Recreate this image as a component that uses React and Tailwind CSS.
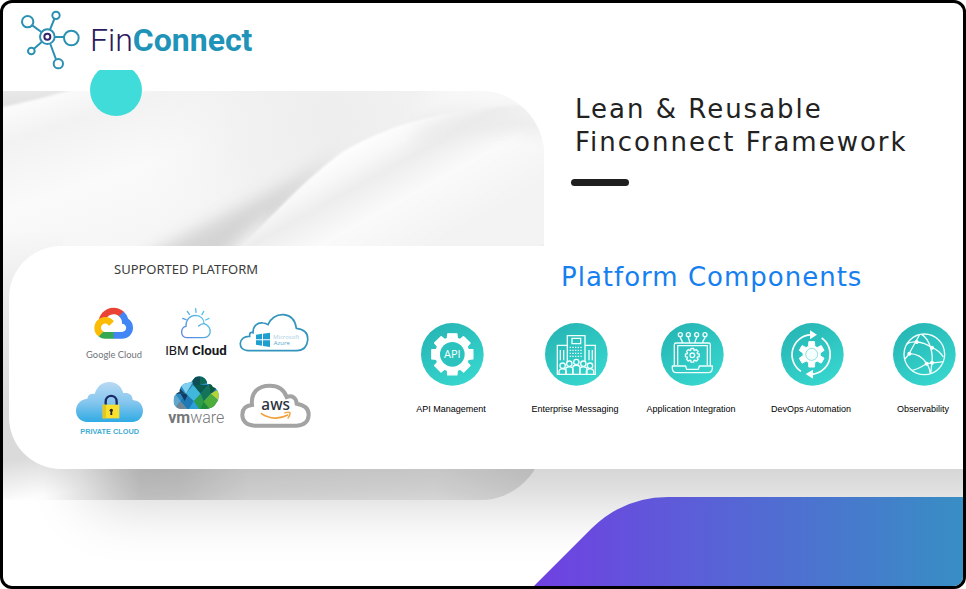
import React from "react";

const TEAL_FROM = "#26b5b4";
const TEAL_TO = "#38d8d0";

function gearPath(cx, cy, teeth, outer, inner, spread, tip) {
  const points = [];
  for (let i = 0; i < teeth; i += 1) {
    const a = (i * 2 * Math.PI) / teeth - Math.PI / 2;
    [
      [inner, -spread],
      [outer, -tip],
      [outer, tip],
      [inner, spread],
    ].forEach(([r, d]) => {
      points.push(`${(cx + r * Math.cos(a + d)).toFixed(1)} ${(cy + r * Math.sin(a + d)).toFixed(1)}`);
    });
  }
  return `M${points.join("L")}Z`;
}

function BrandMark() {
  return (
    <svg className="h-16 w-[62px]" viewBox="54 24 186 192" fill="none" stroke="#2b91b3" strokeWidth="6" aria-hidden="true">
      <path d="M97 76L124 96M163 57L150 89M165 111H192M102 146L125 126M151 132L168 178" />
      <circle cx="83" cy="65" r="17" />
      <circle cx="168" cy="46" r="11" />
      <circle cx="214" cy="114" r="22" />
      <circle cx="94" cy="153" r="10" />
      <circle cx="175" cy="191" r="14" />
      <circle cx="142" cy="110" r="22" />
      <circle cx="142" cy="110" r="9" stroke="#33246b" strokeWidth="6" />
    </svg>
  );
}

function SilkBackdrop() {
  return (
    <svg className="h-full w-full" viewBox="0 0 541 409" preserveAspectRatio="none" aria-hidden="true">
      <defs>
        <linearGradient id="silkBase" gradientUnits="userSpaceOnUse" x1="60" y1="0" x2="110" y2="150">
          <stop offset="0" stopColor="#fbfbfb" />
          <stop offset="0.2" stopColor="#f2f2f2" />
          <stop offset="0.6" stopColor="#fafafa" />
          <stop offset="1" stopColor="#f6f6f6" />
        </linearGradient>
        <linearGradient id="silkCorner" x1="0" y1="0" x2="0.3" y2="1">
          <stop offset="0" stopColor="#ececec" />
          <stop offset="1" stopColor="#e0e0e0" />
        </linearGradient>
        <linearGradient id="silkFold" gradientUnits="userSpaceOnUse" x1="325" y1="72" x2="385" y2="180">
          <stop offset="0" stopColor="#fdfdfd" />
          <stop offset="0.12" stopColor="#f8f8f8" />
          <stop offset="0.28" stopColor="#ededed" />
          <stop offset="0.55" stopColor="#fafafa" />
          <stop offset="1" stopColor="#f3f3f3" />
        </linearGradient>
        <radialGradient id="silkHaze" gradientUnits="userSpaceOnUse" cx="330" cy="30" r="200">
          <stop offset="0" stopColor="#ededed" />
          <stop offset="0.5" stopColor="#f0f0f0" stopOpacity="0.8" />
          <stop offset="1" stopColor="#f4f4f4" stopOpacity="0" />
        </radialGradient>
        <linearGradient id="silkEdge" gradientUnits="userSpaceOnUse" x1="0" y1="140" x2="0" y2="320">
          <stop offset="0" stopColor="#dadada" stopOpacity="0" />
          <stop offset="1" stopColor="#dadada" />
        </linearGradient>
        <linearGradient id="silkFoot" gradientUnits="userSpaceOnUse" x1="0" y1="320" x2="16" y2="409">
          <stop offset="0" stopColor="#dadada" />
          <stop offset="0.55" stopColor="#dadada" />
          <stop offset="1" stopColor="#fdfdfd" />
        </linearGradient>
        <linearGradient id="silkHem" gradientUnits="userSpaceOnUse" x1="40" y1="390" x2="530" y2="380">
          <stop offset="0" stopColor="#dcdcdc" stopOpacity="0" />
          <stop offset="0.08" stopColor="#e2e2e2" stopOpacity="0.6" />
          <stop offset="0.2" stopColor="#d4d4d4" />
          <stop offset="0.28" stopColor="#d6d6d6" />
          <stop offset="0.42" stopColor="#e8e8e8" />
          <stop offset="0.8" stopColor="#ececec" />
          <stop offset="1" stopColor="#dedede" />
        </linearGradient>
        <filter id="silkSoft" x="-50%" y="-50%" width="200%" height="200%" colorInterpolationFilters="sRGB">
          <feGaussianBlur stdDeviation="8" />
        </filter>
        <filter id="silkFine" x="-30%" y="-30%" width="160%" height="160%" colorInterpolationFilters="sRGB">
          <feGaussianBlur stdDeviation="1" />
        </filter>
      </defs>
      <rect width="541" height="409" fill="url(#silkBase)" />
      <rect width="541" height="180" fill="url(#silkHaze)" />
      <path d="M450 -10H520L540 14L450 9L400 22Z" fill="#f8f8f8" filter="url(#silkSoft)" />
      <path d="M-5 -5H84C50 4 25 11 -5 17Z" fill="url(#silkCorner)" filter="url(#silkFine)" />
      <path d="M90 200C160 146 240 122 340 60C310 88 262 134 225 190Z" fill="#d4d4d4" filter="url(#silkSoft)" />
      <path d="M205 190C222 160 246 144 270 118L246 180Z" fill="#f6f6f6" filter="url(#silkSoft)" />
      <path d="M222 172C270 124 300 90 338 62C385 34 440 16 545 14V180Z" fill="url(#silkFold)" filter="url(#silkFine)" />
      <path d="M420 38C450 26 480 24 545 26V42C480 34 450 42 410 54Z" fill="#e9e9e9" filter="url(#silkSoft)" />
      <path d="M518 164L545 153V170H518Z" fill="#dddddd" filter="url(#silkFine)" />
      <rect y="140" width="60" height="180" fill="url(#silkEdge)" />
      <rect y="320" width="200" height="89" fill="url(#silkFoot)" />
      <rect x="40" y="372" width="501" height="37" fill="url(#silkHem)" />
    </svg>
  );
}

function GoogleCloudLogo() {
  return (
    <svg className="w-full" viewBox="33 30 246 168" role="img" aria-label="Google Cloud">
      <g transform="translate(103 38) scale(0.453)">
        <path fill="#ea4335" d="M170.252 56.819l22.253-22.253 1.483-9.37C153.437-11.677 88.976-7.496 52.42 33.92 42.267 45.423 34.734 59.764 30.717 74.573l7.97-1.123 44.505-7.34 3.436-3.513c19.797-21.742 53.27-24.667 76.128-6.168l7.496.39z" />
        <path fill="#4285f4" d="M224.205 73.918a100.249 100.249 0 0 0-30.217-48.722l-31.232 31.232a55.515 55.515 0 0 1 20.379 44.037v5.544c15.35 0 27.797 12.445 27.797 27.796 0 15.352-12.446 27.573-27.797 27.573h-55.671l-5.466 5.934v33.34l5.466 5.231h55.67c39.93.311 72.553-31.494 72.864-71.424a72.303 72.303 0 0 0-31.793-60.541" />
        <path fill="#34a853" d="M71.87 205.796h55.593V161.29H71.87a27.275 27.275 0 0 1-11.4-2.498l-7.887 2.42-22.409 22.253-1.952 7.574a72.164 72.164 0 0 0 43.648 14.757" />
        <path fill="#fbbc05" d="M71.87 61.425C31.94 61.663-.237 94.228.001 134.158a72.301 72.301 0 0 0 28.222 56.88l32.248-32.246c-13.99-6.322-20.208-22.786-13.887-36.776 6.32-13.99 22.786-20.208 36.775-13.888a27.796 27.796 0 0 1 13.887 13.888l32.248-32.248A72.224 72.224 0 0 0 71.87 61.425" />
      </g>
      <text x="162" y="189" textAnchor="middle" className="fill-[#6f7377] font-['Lato',sans-serif] text-[28px]">Google Cloud</text>
    </svg>
  );
}

function IbmCloudLogo() {
  return (
    <svg className="w-full" viewBox="279 30 246 168" role="img" aria-label="IBM Cloud">
      <defs>
        <linearGradient id="ibmStroke" gradientUnits="userSpaceOnUse" x1="364" y1="128" x2="450" y2="45">
          <stop offset="0" stopColor="#5b7fe0" />
          <stop offset="1" stopColor="#4fd6e6" />
        </linearGradient>
      </defs>
      <g fill="none" stroke="url(#ibmStroke)" strokeWidth="4" strokeLinecap="round">
        <path d="M431 85C446 90 453 103 450 114C447 124 440 128 430 128H381C370 128 364 120 365 109C366 100 371 95 378 94C377 74 390 61 407 61C422 62 432 72 432 86C425 86 420 89 416 93" />
        <path d="M368 70L378 74M382 49L388 58M407 41L408 52M431 49L426 59M447 70L437 75" />
      </g>
      <text x="408" y="180" textAnchor="middle" className="fill-[#16181c] font-['Roboto',sans-serif] text-[40px]">
        IBM <tspan className="font-bold">Cloud</tspan>
      </text>
    </svg>
  );
}

function AzureLogo() {
  return (
    <svg className="w-full" viewBox="525 30 246 168" role="img" aria-label="Microsoft Azure">
      <path d="M563 167C549 165 540 158 541 145C542 132 553 123 569 124C568 114 572 110 579 113C579 93 591 82 609 84C615 84 620 86 624 89C634 67 649 58 671 59C693 61 706 76 709 100C733 103 745 116 743 136C741 155 730 166 711 167Z" fill="none" stroke="#3395bd" strokeWidth="5" />
      <path fill="#1f9fd0" d="M588 119L606 116V133H588ZM609 116L630 113V133H609ZM588 136H606V152L588 149ZM609 136H630V156L609 153Z" />
      <text x="639" y="132" className="fill-[#a9cfe2] font-['Open_Sans',sans-serif] text-[18px]">Microsoft</text>
      <text x="641" y="151" className="fill-[#4fa6cc] font-['Open_Sans',sans-serif] text-[18px]">Azure</text>
    </svg>
  );
}

function PrivateCloudLogo() {
  return (
    <svg className="w-full" viewBox="33 234 246 198" role="img" aria-label="Private Cloud">
      <defs>
        <linearGradient id="privateSky" x1="0" y1="0" x2="0" y2="1">
          <stop offset="0" stopColor="#b8daf4" />
          <stop offset="0.5" stopColor="#86c6ee" />
          <stop offset="1" stopColor="#2fabe4" />
        </linearGradient>
      </defs>
      <path d="M82 381C62 380 48 366 48 347C49 326 62 313 82 311C84 299 92 295 104 297C111 274 126 261 149 261C171 262 186 276 190 295C203 291 218 298 218 315C238 317 249 329 249 348C248 368 236 380 217 381Z" fill="url(#privateSky)" />
      <path d="M137 331V320C137 297 170 297 170 320V331" fill="none" stroke="#1d2a66" strokeWidth="7" />
      <rect x="128" y="329" width="50" height="41" fill="#f8e02c" />
      <path d="M128 329H138V370H128Z" fill="#e5c51f" />
      <circle cx="154" cy="346" r="5" fill="#2a2a3c" />
      <path d="M152 346H156L157 360H151Z" fill="#2a2a3c" />
      <text x="149" y="418" textAnchor="middle" className="fill-[#43acd3] font-['Liberation_Sans',Arial,sans-serif] text-[22px] font-bold">PRIVATE CLOUD</text>
    </svg>
  );
}

function VmwareLogo() {
  return (
    <svg className="w-full" viewBox="279 234 246 198" role="img" aria-label="vmware">
      <defs>
        <clipPath id="vmCloud">
          <path d="M362 342C348 340 340 330 341 316C341 303 348 294 359 291C358 275 370 263 386 263C392 263 395 260 399 255C404 247 410 244 418 244C431 244 440 253 442 267C451 266 457 270 458 276C470 279 477 290 476 303C476 315 471 322 468 325C463 336 450 342 438 342Z" />
        </clipPath>
      </defs>
      <g clipPath="url(#vmCloud)">
        <path fill="#2a8bc0" d="M340 240H480V345H340Z" />
        <path fill="#5fa7cf" d="M340 290L362 318L340 345Z" />
        <path fill="#18405f" d="M355 275L375 296L340 296Z" />
        <path fill="#70879a" d="M340 345L362 318L385 345Z" />
        <path fill="#7fd0ee" d="M358 262H398L378 296Z" />
        <path fill="#1d7ab5" d="M362 318L378 296L400 318L385 345Z" />
        <path fill="#143a63" d="M362 296H385L374 318Z" />
        <path fill="#2a9fd8" d="M385 345L402 318L420 345Z" />
        <path fill="#42b7dc" d="M378 296L400 270L422 296L402 318Z" />
        <path fill="#0f4d55" d="M393 240H420V270L400 270Z" />
        <path fill="#0c6a56" d="M420 240L448 262L420 270Z" />
        <path fill="#0b5a50" d="M400 270H445L422 296Z" />
        <path fill="#13745a" d="M422 296L445 270L452 296L430 320Z" />
        <path fill="#2c9e4a" d="M402 318L422 296L432 322L420 345Z" />
        <path fill="#0e5a3e" d="M445 265L480 270L452 298Z" />
        <path fill="#b4d334" d="M452 296L480 280V320Z" />
        <path fill="#4fae3a" d="M430 320L452 296L480 322L450 345Z" />
        <path fill="#1f8a3a" d="M420 345L431 320L452 345Z" />
      </g>
      <text x="409" y="383" textAnchor="middle" className="fill-[#76777a] font-['Roboto',sans-serif] text-[48px] font-light">
        <tspan className="font-bold">vm</tspan>ware
      </text>
    </svg>
  );
}

function AwsLogo() {
  return (
    <svg className="w-full" viewBox="525 234 246 198" role="img" aria-label="aws">
      <path d="M584 392C559 391 546 377 547 358C548 340 560 331 576 330C572 293 594 272 629 272C656 272 673 285 680 306C697 300 709 309 710 326C733 330 747 341 746 360C745 380 732 391 710 392Z" fill="none" stroke="#a3a3a3" strokeWidth="12" />
      <text x="647" y="345" textAnchor="middle" className="fill-[#2b3340] font-['Noto_Sans',sans-serif] text-[46px] font-medium">aws</text>
      <path d="M604 356C630 373 660 373 683 360" fill="none" stroke="#f2a03c" strokeWidth="5" strokeLinecap="round" />
      <path d="M674 354C681 351 688 351 690 353C691 357 688 364 684 369" fill="none" stroke="#f2a03c" strokeWidth="4" strokeLinecap="round" />
    </svg>
  );
}

function Badge({ id, children }) {
  return (
    <svg className="size-[63px]" viewBox="0 0 189 189" aria-hidden="true">
      <defs>
        <linearGradient id={id} x1="0.2" y1="0" x2="0.8" y2="1">
          <stop offset="0" stopColor={TEAL_FROM} />
          <stop offset="1" stopColor={TEAL_TO} />
        </linearGradient>
      </defs>
      <circle cx="94" cy="94" r="94" fill={`url(#${id})`} />
      {children}
    </svg>
  );
}

function ApiIcon() {
  return (
    <Badge id="badgeApi">
      <path d={gearPath(94, 94, 8, 63, 50, 0.3, 0.22)} fill="#fff" stroke="#fff" strokeWidth="4" strokeLinejoin="round" />
      <circle cx="94" cy="94" r="37" fill="#2cc3bf" />
      <text x="94" y="105" textAnchor="middle" className="fill-white font-['Open_Sans',sans-serif] text-[33px]">API</text>
    </Badge>
  );
}

function EnterpriseIcon() {
  const people = [[53, 128], [73, 122], [94, 117], [115, 122], [135, 128]];
  return (
    <Badge id="badgeEnterprise">
      <g fill="none" stroke="#effffe" strokeWidth="4">
        <path d="M37 154V67H67M67 120V38H120V120M120 67H151V154M35 154H153" />
        <path d="M81 46H107V62H81Z" />
        <path d="M46 81V112M56 81V112M132 81V112M142 81V112" />
        <path d="M74 73H113M74 82H113M74 91H113M74 100H113" strokeDasharray="4 4" />
        {people.map(([x, y]) => (
          <g key={x}>
            <circle cx={x} cy={y} r="8" fill="#2fc7c3" />
            <path d={`M${x - 11} 154V${y + 18}C${x - 11} ${y + 7} ${x + 11} ${y + 7} ${x + 11} ${y + 18}V154`} />
          </g>
        ))}
      </g>
    </Badge>
  );
}

function IntegrationIcon() {
  return (
    <Badge id="badgeIntegration">
      <g fill="none" stroke="#effffe" strokeWidth="4" strokeLinejoin="round">
        <path d="M40 128V65Q40 60 45 60H143Q148 60 148 65V128" />
        <path d="M50 126V68H139V126" />
        <path d="M34 129H74L77 139H112L115 129H154V136Q154 149 142 149H46Q34 149 34 136Z" />
        <circle cx="58" cy="35" r="6" />
        <circle cx="82" cy="35" r="6" />
        <circle cx="107" cy="35" r="6" />
        <circle cx="132" cy="35" r="6" />
        <path d="M58 41C58 51 64 48 64 60M82 41C82 51 86 48 86 60M107 41C107 51 102 48 102 60M132 41C132 51 125 48 125 60" />
        <path d={gearPath(94, 97, 8, 21, 16, 0.3, 0.2)} />
        <circle cx="94" cy="97" r="7" />
      </g>
    </Badge>
  );
}

function DevOpsIcon() {
  return (
    <Badge id="badgeDevops">
      <path d={gearPath(92, 94, 6, 39, 26, 0.36, 0.22)} fill="#fff" stroke="#fff" strokeWidth="3" strokeLinejoin="round" />
      <circle cx="92" cy="94" r="18" fill="#f4fffe" stroke="#5fcfcb" strokeWidth="2" />
      <g fill="none" stroke="#fff" strokeWidth="5">
        <path d="M60 145A60 60 0 0 1 90 35" />
        <path d="M122 45A60 60 0 0 1 93 154" />
      </g>
      <path d="M87 22L108 35L87 49ZM96 140L74 153L96 167Z" fill="#fff" />
    </Badge>
  );
}

function ObservabilityIcon() {
  return (
    <Badge id="badgeObservability">
      <g fill="none" stroke="#effffe" strokeWidth="4">
        <circle cx="94" cy="94" r="61" />
        <path d="M41 64C52 54 62 56 71 57C90 58 104 65 117 74C132 80 142 88 151 102M79 36C66 62 56 76 49 92L36 108M86 34C108 48 121 85 117 119L113 152M49 92C75 92 90 104 101 122C108 130 110 140 112 152M101 122C118 118 138 120 150 116M58 142C76 138 88 130 101 122" />
      </g>
      <g fill="#fff">
        <circle cx="71" cy="57" r="6" />
        <circle cx="49" cy="92" r="6" />
        <circle cx="117" cy="74" r="6" />
        <circle cx="101" cy="122" r="6" />
        <circle cx="117" cy="119" r="6" />
      </g>
    </Badge>
  );
}

const PLATFORMS = [GoogleCloudLogo, IbmCloudLogo, AzureLogo, PrivateCloudLogo, VmwareLogo, AwsLogo];

const COMPONENTS = [
  { label: "API Management", Icon: ApiIcon },
  { label: "Enterprise Messaging", Icon: EnterpriseIcon },
  { label: "Application Integration", Icon: IntegrationIcon },
  { label: "DevOps Automation", Icon: DevOpsIcon },
  { label: "Observability", Icon: ObservabilityIcon },
];

export default function App() {
  return (
    <main className="relative isolate min-h-screen overflow-hidden rounded-xl border-[3px] border-black bg-white">
      <div className="absolute top-[88px] left-0 -z-10 h-[409px] w-[541px] overflow-hidden rounded-r-[64px]">
        <SilkBackdrop />
      </div>

      <header className="flex h-[67px] items-center gap-[10px] pt-[6px] pl-[15px]">
        <BrandMark />
        <p className="font-['Roboto',sans-serif] text-[32px] leading-8 font-light text-[#2a1a5e]">
          Fin<span className="font-bold text-[#1f93b8]">Connect</span>
        </p>
      </header>

      <section className="grid h-[176px] grid-cols-[568px_1fr]">
        <div className="ml-[87px] flex h-[46px] w-[52px] items-end overflow-hidden">
          <span className="size-[52px] shrink-0 rounded-full bg-[#40dcd9]" />
        </div>
        <div className="pt-[23px]">
          <h1 className="pl-1 font-['DejaVu_Sans',Verdana,sans-serif] text-[26px] leading-[33px] tracking-[2px] text-[#222222]">
            Lean &amp; Reusable
            <br />
            Finconnect Framework
          </h1>
          <div className="mt-5 h-[7px] w-[58px] rounded-full bg-[#1f1f1f]" />
        </div>
      </section>

      <section className="-mr-24 ml-[6px] grid h-[223px] grid-cols-[377px_1fr] rounded-l-[52px] bg-white pt-[15px] pr-[85px] shadow-[40px_75px_60px_-40px_rgba(0,0,0,0.18)]">
        <div className="pl-[62px]">
          <h2 className="pl-[43px] font-['Noto_Sans',sans-serif] text-[13px] leading-4 text-[#3c3c3c]">SUPPORTED PLATFORM</h2>
          <ul className="mt-7 grid w-[246px] grid-cols-3 gap-y-3">
            {PLATFORMS.map((Logo) => (
              <li key={Logo.name}>
                <Logo />
              </li>
            ))}
          </ul>
        </div>
        <div>
          <h2 className="pl-[175px] font-['DejaVu_Sans',Verdana,sans-serif] text-[26px] leading-8 tracking-[1px] text-[#1680f0]">
            Platform Components
          </h2>
          <ul className="mt-[30px] grid grid-cols-[132fr_116fr_116fr_124fr_100fr]">
            {COMPONENTS.map(({ label, Icon }) => (
              <li key={label} className="flex flex-col items-center gap-[17px]">
                <Icon />
                <span className="pr-0.5 font-['Liberation_Sans',Arial,sans-serif] text-[9px] leading-3 whitespace-nowrap text-black">{label}</span>
              </li>
            ))}
          </ul>
        </div>
      </section>

      <svg className="absolute right-0 bottom-0 h-[89px] w-[429px]" viewBox="0 0 429 89" aria-hidden="true">
        <defs>
          <linearGradient id="footerWave" x1="0" y1="0" x2="1" y2="0">
            <stop offset="0" stopColor="#7040e2" />
            <stop offset="0.5" stopColor="#5468d4" />
            <stop offset="1" stopColor="#388ec4" />
          </linearGradient>
        </defs>
        <path d="M0 89L58 31Q90 0 134 0H429V89Z" fill="url(#footerWave)" />
      </svg>
    </main>
  );
}
